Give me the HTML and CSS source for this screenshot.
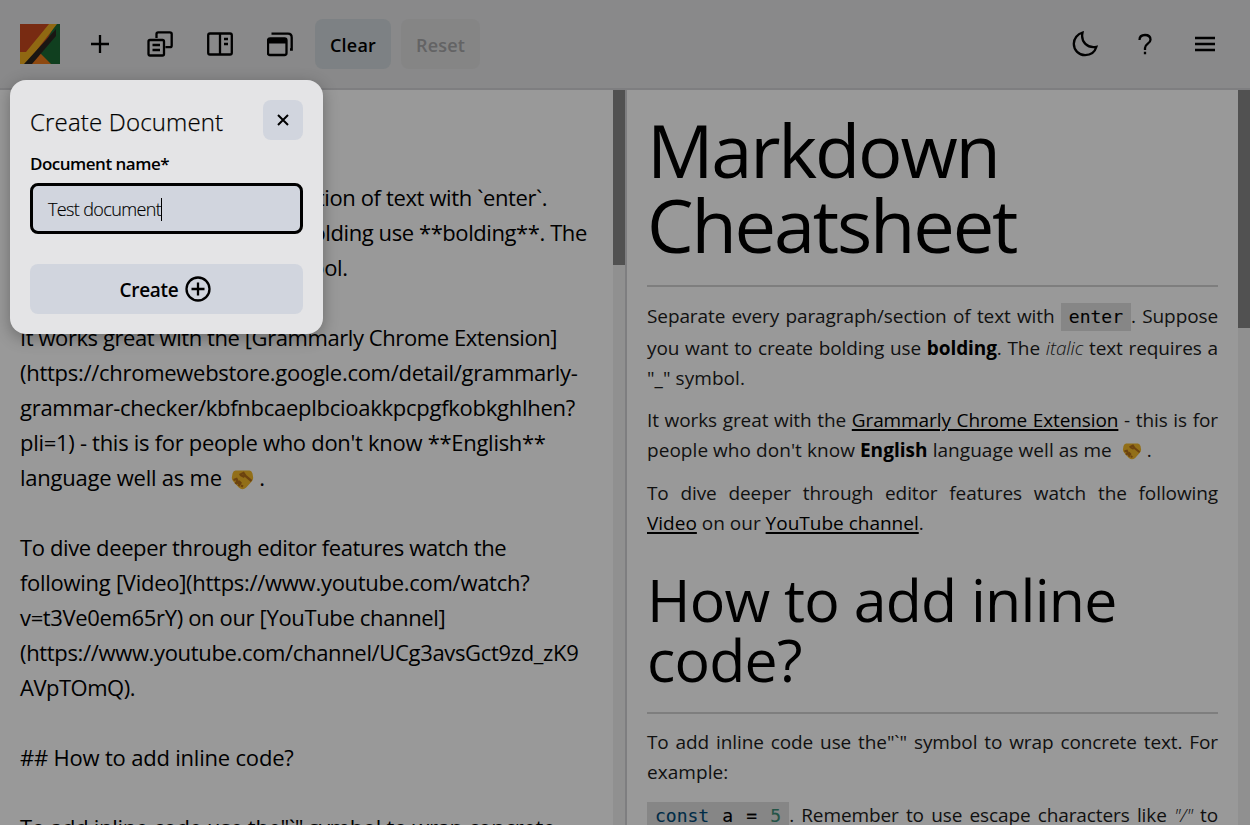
FILE: index.html
```html
<!DOCTYPE html>
<html lang="en">
<head>
<meta charset="utf-8">
<title>Markdown Editor</title>
<link rel="stylesheet" href="styles.css">
</head>
<body>
<div class="app">
  <header class="bar">
    <svg class="logo" viewBox="0 0 40 40"><path fill="#c8491f" d="M0 0h40v40H0z"/><path fill="#1b6a35" d="M40 0v40H30L20 30 35 0z"/><path fill="#ed7a1c" d="M20 29l11 11H9z"/><path fill="#f0ae1f" d="M29 0h8L6 40H0V28h6z"/><path fill="#2b2620" d="M36 5v7L12 40H4z"/></svg>
    <button class="icon"><svg viewBox="0 0 26 26"><path d="M13 4v18M4 13h18"/></svg></button>
    <button class="icon"><svg viewBox="0 0 26 26"><path d="M9.500 7V3Q9.500 1.300 11.200 1.300h11.600Q24.700 1.300 24.700 3v11.500q0 1.700-1.700 1.700h-4.500M3 9h12.500q1.500 0 1.500 1.500v12.500q0 1.500-1.500 1.500H3q-1.500 0-1.500-1.500V10.500Q1.500 9 3 9zM5.500 14h7.500M5.500 19h7.500"/></svg></button>
    <button class="icon"><svg viewBox="0 0 26 26"><path d="M3 2.500h20q1.800 0 1.800 1.800v17.400q0 1.800-1.800 1.800H3q-1.800 0-1.800-1.800V4.300Q1.200 2.500 3 2.500zM13 2.500v21M17 8h4M17 13h4"/></svg></button>
    <button class="icon"><svg viewBox="0 0 26 26"><path d="M3 7.500h14.500q2 0 2 2v12.500q0 2-2 2H3q-2 0-2-2V9.500q0-2 2-2zM4.500 2.700h16.500q3.700 0 3.700 3.700V18.500H23"/><path class="solid" d="M1 7.500h18.500v5H1z"/></svg></button>
    <button class="btn">Clear</button>
    <button class="btn btn-off" disabled>Reset</button>
    <span class="spacer"></span>
    <button class="icon"><svg viewBox="0 0 26 26"><path d="M10.500 1.700C5.500 3 1.800 7.500 1.800 12.800c0 6.300 5 11.300 11.300 11.300 5.300 0 9.800-3 11.300-8.300C15.500 17.500 8.500 11 10.500 1.700z"/></svg></button>
    <button class="icon"><svg viewBox="0 0 26 26"><path d="M7.500 9c0-3 2-5 5.500-5s5.500 2 5.500 4.700c0 4-5.500 4-5.500 8.300v2M13 20.800v2.500"/></svg></button>
    <button class="icon"><svg viewBox="0 0 26 26"><path d="M3 7h20M3 13h20M3 19h20"/></svg></button>
  </header>
  <main class="panes">
    <section class="editor">
      <div># Markdown Cheatsheet</div>
      <div>&nbsp;</div>
      <div class="e1">Separate every paragraph/section of text with `enter`.</div>
      <div class="e2">Suppose you want to create bolding use **bolding**. The</div>
      <div class="e3">_italic_ text requires a "_" symbol.</div>
      <div>&nbsp;</div>
      <div class="e4">It works great with the [Grammarly Chrome Extension]</div>
      <div class="e5">(https://chromewebstore.google.com/detail/grammarly-</div>
      <div class="e6">grammar-checker/kbfnbcaeplbcioakkpcpgfkobkghlhen?</div>
      <div class="e7">pli=1) - this is for people who don't know **English**</div>
      <div class="e8">language well as me <svg class="shake" viewBox="0 0 22 20"><path fill="#f4b928" d="M4 0.500h14q2 0 3 3l.7 4.500q0 2-2 4l-5 5.500q-3.700 3.500-7.400 0l-5-5.500q-2-2-2-4L1 3.500q1-3 3-3z"/><path fill="none" stroke="#b5701a" d="M8 5l4-2 2 3 6 5M2 10l3-1 1 2-2 3M6 14l2-2 1 1-2 3M10 17l1-2M9 5l4 2"/></svg>.</div>
      <div>&nbsp;</div>
      <div class="e9">To dive deeper through editor features watch the</div>
      <div class="e10">following [Video](https://www.youtube.com/watch?</div>
      <div class="e11">v=t3Ve0em65rY) on our [YouTube channel]</div>
      <div class="e12">(https://www.youtube.com/channel/UCg3avsGct9zd_zK9</div>
      <div class="e13">AVpTOmQ).</div>
      <div>&nbsp;</div>
      <div class="e14">## How to add inline code?</div>
      <div>&nbsp;</div>
      <div class="e15">To add inline code use the"`" symbol to wrap concrete</div>
    </section>
    <div class="track"><div class="thumb thumb-left"></div></div>
    <article class="preview">
      <h1>Markdown<br>Cheatsheet</h1>
      <p class="intro"><span class="line first">Separate every paragraph/section of text with <code>enter</code>. Suppose</span><span class="line">you want to create bolding use <strong>bolding</strong>. The <em>italic</em> text requires a</span><span class="last">"_" symbol.</span></p>
      <p><span class="line">It works great with the <a>Grammarly Chrome Extension</a> - this is for</span><span class="last">people who don't know <strong>English</strong> language well as me <svg class="shake small" viewBox="0 0 22 20"><path fill="#f4b928" d="M4 0.500h14q2 0 3 3l.7 4.500q0 2-2 4l-5 5.500q-3.700 3.500-7.400 0l-5-5.500q-2-2-2-4L1 3.500q1-3 3-3z"/><path fill="none" stroke="#b5701a" d="M8 5l4-2 2 3 6 5M2 10l3-1 1 2-2 3M6 14l2-2 1 1-2 3M10 17l1-2M9 5l4 2"/></svg>.</span></p>
      <p><span class="line">To dive deeper through editor features watch the following</span><span class="last tight"><a>Video</a> on our <a>YouTube channel</a>.</span></p>
      <h2>How to add inline<br>code?</h2>
      <p><span class="line">To add inline code use the"`" symbol to wrap concrete text. For</span><span class="last">example:</span></p>
      <p><span class="line"><code class="wide"><b class="kw">const</b> a = <b class="num">5</b></code>. Remember to use escape characters like <em>"/"</em> to</span></p>
    </article>
    <div class="track"><div class="thumb thumb-right"></div></div>
  </main>
</div>
<div class="overlay">
  <form class="modal">
    <div class="modal-head"><h3>Create Document</h3><button type="button" class="close"><svg viewBox="0 0 12 12"><path d="M1 1l10 10M11 1L1 11"/></svg></button></div>
    <label>Document name*</label>
    <div class="field"><span>Test document</span><i class="caret"></i></div>
    <button type="button" class="create"><span>Create</span><svg viewBox="0 0 26 26"><circle cx="13" cy="13" r="11.500"/><path d="M13 6.500v13M6.500 13h13"/></svg></button>
  </form>
</div>
</body>
</html>
```
FILE: styles.css
```css
* { box-sizing: border-box; margin: 0; padding: 0; }
body { width: 1250px; height: 825px; overflow: hidden; background: #fff; color: #000; font-family: "Open Sans", "Noto Sans", sans-serif; }
button { border: 0; background: none; font: inherit; color: inherit; }
svg { fill: none; stroke: #000; stroke-width: 2.3; flex: none; }
.app { height: 825px; display: flex; flex-direction: column; }
.bar { height: 90px; flex: none; display: flex; align-items: center; gap: 10px; padding: 0 20px; background: #e4e4e6; border-bottom: 2px solid #d3d3d6; }
.logo { width: 40px; height: 40px; stroke: none; }
.icon { width: 50px; height: 50px; display: flex; align-items: center; justify-content: center; }
.icon svg { width: 26px; height: 26px; }
.logo + .icon { margin-left: 5px; }
.icon .solid { fill: #000; stroke: none; }
.btn { width: 76px; height: 50px; padding-top: 2px; border-radius: 8px; background: #d0d8dc; font-size: 18px; font-weight: 600; letter-spacing: .2px; }
.btn-off { width: 79px; background: #dedede; color: #a5a5a7; }
.spacer { flex: 1; }
.panes { flex: 1; min-height: 0; display: flex; overflow: hidden; }
.editor { width: 613px; padding: 20px; overflow: hidden; font-size: 22px; line-height: 35px; letter-spacing: -.35px; white-space: nowrap; }
.e1 { letter-spacing: -.37px; }
.e2 { letter-spacing: -.42px; }
.e3 { letter-spacing: -.33px; }
.e4 { letter-spacing: -.42px; }
.e5 { letter-spacing: -.28px; }
.e6 { letter-spacing: -.27px; }
.e7 { letter-spacing: -.29px; }
.e8 { letter-spacing: -.24px; }
.e9 { letter-spacing: -.38px; }
.e10 { letter-spacing: -.28px; }
.e12 { letter-spacing: -.34px; }
.e13 { letter-spacing: -.5px; }
.e14 { letter-spacing: -.2px; }
.e15 { letter-spacing: -.31px; }
.track { width: 12px; flex: none; background: #f1f1f1; }
.thumb { background: #888; }
.thumb-left { height: 175px; }
.thumb-right { height: 238px; }
.shake { width: 23px; height: 20px; margin: 0 5px 0 4px; vertical-align: -4px; stroke: none; }
.shake.small { width: 20px; height: 17px; margin-left: 5px; vertical-align: -3px; }
.preview { width: 613px; padding: 22px 20px 0; border-left: 2px solid #d3d3d5; overflow: hidden; font-size: 19px; color: #1c1c1c; line-height: 30px; letter-spacing: -.1px; white-space: nowrap; }
h1, h2 { font-weight: 400; color: #000; border-bottom: 2px solid #d3d3d3; }
h1 { font-size: 74px; line-height: 75px; height: 175px; margin-bottom: 14px; letter-spacing: -2.2px; }
h2 { font-size: 59px; line-height: 60px; height: 145px; margin: 31px 0 13px; letter-spacing: -.75px; }
p { margin-bottom: 13px; }
.intro { margin-bottom: 12px; }
.line, .last { display: block; height: 30px; }
.last { letter-spacing: .05px; }
.tight { letter-spacing: 0; }
.line { text-align: justify; text-align-last: justify; white-space: normal; }
.first { height: 32px; }
code { display: inline-block; height: 28px; padding: 0 8px; background: #dfdfdf; color: #000; font: 18px/28px "DejaVu Sans Mono", monospace; letter-spacing: 0; white-space: pre; -webkit-text-stroke: .1px; }
.wide { word-spacing: 2.3px; }
b { font-weight: 400; }
strong { color: #000; }
.kw { color: #004a77; }
.num { color: #3d8d77; }
em { font-weight: 300; }
a { color: #000; text-decoration: underline; text-decoration-thickness: 2px; text-underline-offset: 2px; }
.overlay { position: absolute; inset: 0; background: rgba(0, 0, 0, .4); }
.modal { position: absolute; left: 10px; top: 80px; width: 313px; height: 254px; padding: 20px; border-radius: 16px; background: #e4e4e6; box-shadow: 0 4px 16px rgba(0, 0, 0, .3); display: flex; flex-direction: column; }
.modal-head { display: flex; justify-content: space-between; align-items: center; height: 40px; }
h3 { font-size: 24px; font-weight: 300; letter-spacing: .17px; padding-top: 3px; white-space: nowrap; -webkit-text-stroke: .25px; }
.close { width: 40px; height: 40px; border-radius: 8px; background: #d1d5de; display: flex; align-items: center; justify-content: center; }
.close svg { width: 12px; height: 12px; stroke-width: 2; }
label { font-size: 17px; font-weight: 600; line-height: 24px; margin-top: 12px; letter-spacing: -.5px; }
.field { height: 51px; margin-top: 7px; border: 3px solid #000; border-radius: 8px; background: #d1d5de; display: flex; align-items: center; padding: 1px 15px 0; font-size: 18px; font-weight: 300; letter-spacing: -.63px; -webkit-text-stroke: .15px; }
.caret { width: 1px; height: 23px; background: #000; }
.create { height: 50px; margin-top: 30px; padding-right: 2px; border-radius: 8px; background: #d1d5de; display: flex; align-items: center; justify-content: center; gap: 7px; font-size: 19px; font-weight: 600; letter-spacing: -.3px; }
.create span { padding-top: 1px; }
.create svg { width: 26px; height: 26px; }
```
